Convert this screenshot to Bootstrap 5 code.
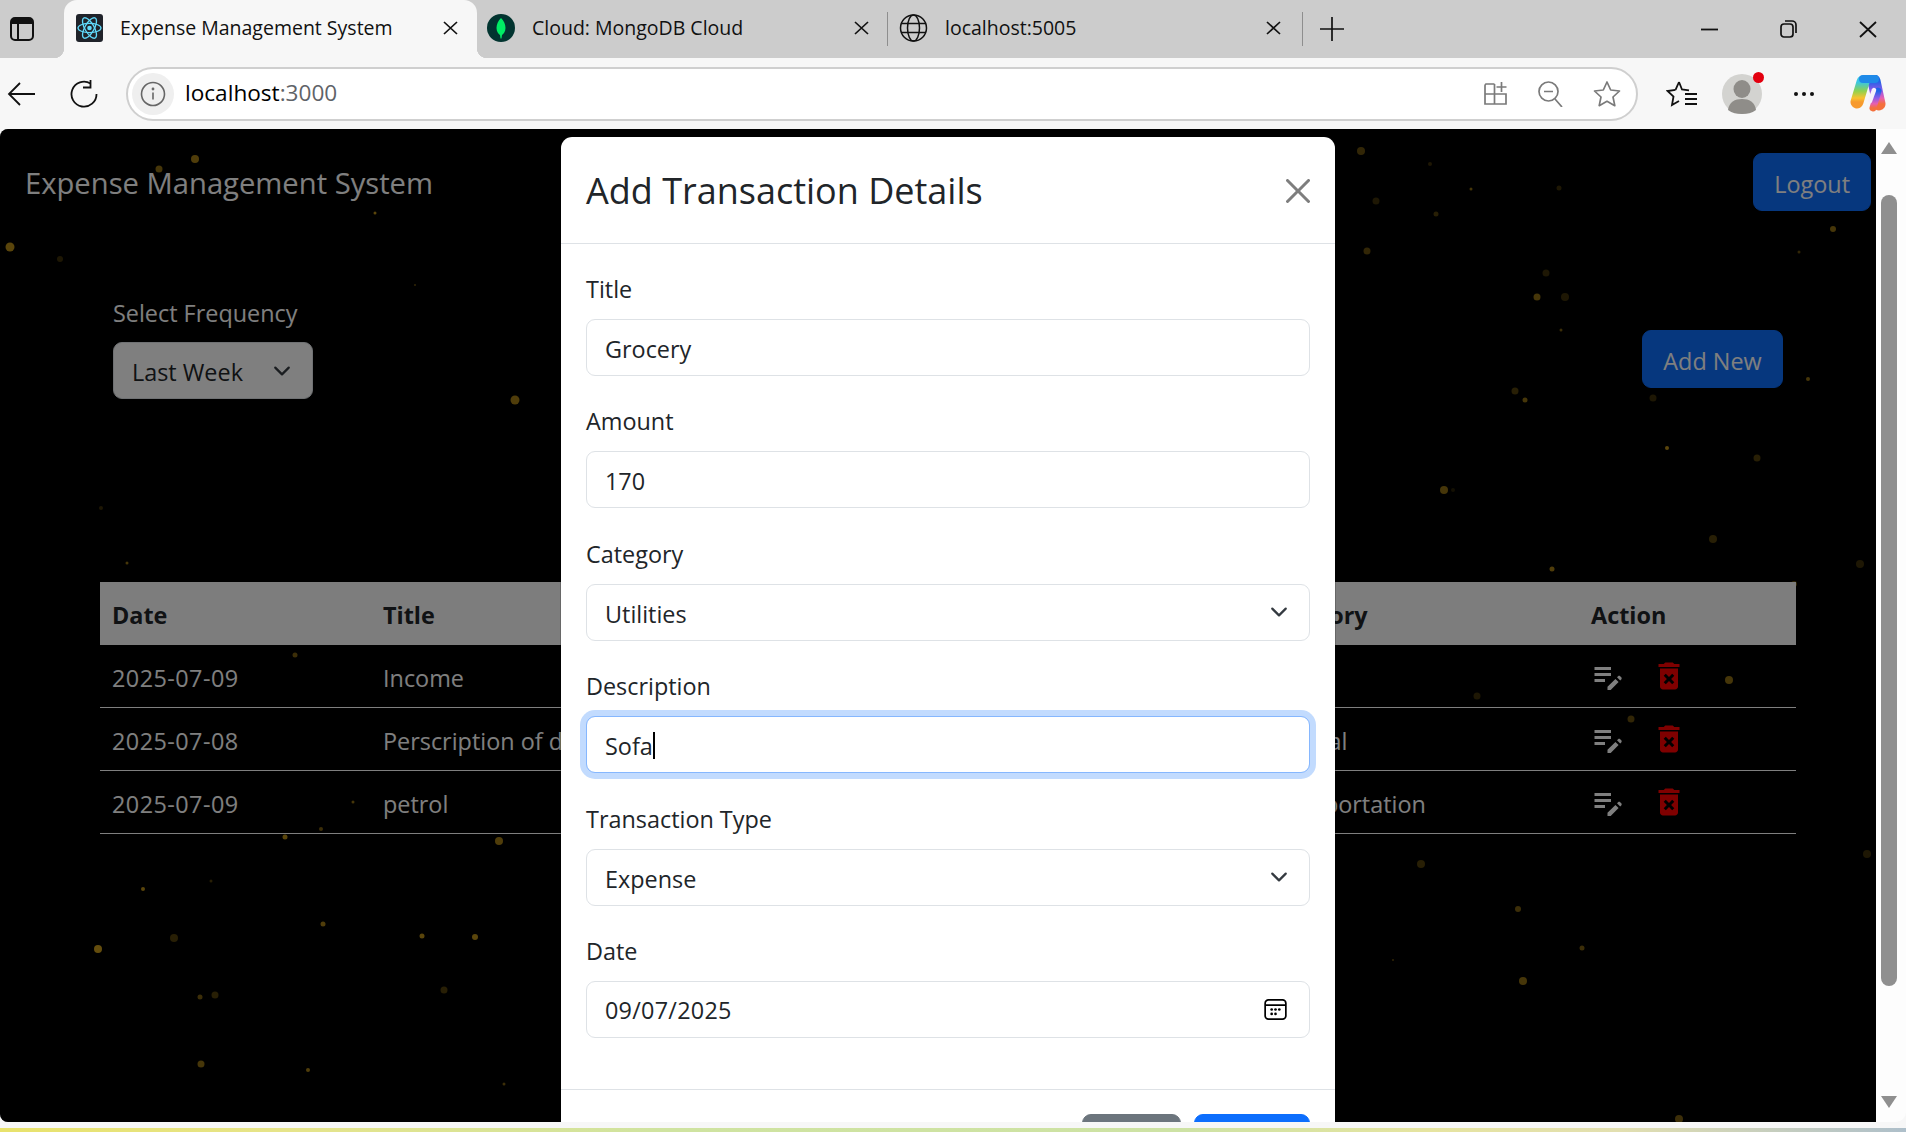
<!DOCTYPE html>
<html lang="en">
  <head>
    <meta charset="UTF-8" />
    <meta name="viewport" content="width=device-width, initial-scale=1.0" />
    <title>Expense Management System</title>
    <link href="https://cdn.jsdelivr.net/npm/bootstrap@5.3.0/dist/css/bootstrap.min.css" rel="stylesheet" />
    <style>
      /* the captured page runs at 150% zoom, so rem is 24px */
      html { font-size: 24px; }
      :root {
        --bs-body-font-family: "Open Sans", "Noto Sans", sans-serif;
        --bs-body-font-size: 23.4px;
        --bs-body-line-height: 1.54;
      }
      body { overflow: hidden; background: #f7f7f7; }

      .window-shell { width: 1906px; height: 1132px; }
      .tab-strip { height: 58px; background: #ccc; color: #111; font-size: 19.5px; line-height: 26px; }
      .win-toggle { width: 64px; padding-left: 10px; }
      .browser-tab { height: 58px; padding: 0 19px 2px 12px; }
      .tab-active { width: 413px; background: #f7f7f7; border-radius: 13px 13px 0 0; position: relative; }
      .tab-active::before, .tab-active::after { content: ""; position: absolute; bottom: 0; width: 10px; height: 10px; }
      .tab-active::before { left: -10px; background: radial-gradient(circle at 0 0, #ccc 10px, #f7f7f7 10.5px); }
      .tab-active::after { right: -10px; background: radial-gradient(circle at 100% 0, #ccc 10px, #f7f7f7 10.5px); }
      .tab-idle { width: 410px; padding: 0 18px 2px 10px; }
      .tab-last { width: 414px; padding: 0 21px 2px 11px; }
      .tab-label { margin-left: 17px; }
      .tab-divider { width: 1px; height: 34px; background: #8e8e8e; }
      .new-tab { margin-left: 17px; }
      .win-controls { margin-left: auto; gap: 62px; padding-right: 29px; }

      .tool-row { height: 71px; background: #f7f7f7; padding-left: 7px; }
      .reload-btn { margin-left: 35px; margin-right: 28px; }
      .address-pill { width: 1512px; height: 54px; background: #fff; border: 2px solid #cfcfcf; border-radius: 27px; padding: 0 15px 0 4px; font-size: 22.6px; color: #000; }
      .info-chip { width: 42px; height: 42px; border-radius: 50%; background: #efefef; margin-right: 11px; }
      .url-port { color: #5f6368; }
      .pill-icons { margin-left: auto; gap: 30px; }
      .tool-right { margin-left: 28px; }
      .avatar-chip { width: 40px; height: 40px; margin-left: 25px; margin-right: 31px; border-radius: 50%; background: #d3d3d0; position: relative; overflow: visible; }
      .avatar-dot { position: absolute; top: -2px; right: -2px; width: 11px; height: 11px; border-radius: 50%; background: #e3000f; }
      .copilot-mark { margin-left: 34px; }

      .view-row { height: 993px; }
      .page-area { width: 1876px; position: relative; overflow: hidden; background: #000; color: #fff; border-radius: 8px 0 0 8px; }
      .star-field { position: absolute; inset: 0; width: 1876px; height: 993px; }
      .page-content { position: relative; }
      .top-bar { padding: 24px 5px 0 25px; }
      .top-brand { font-size: 29.2px; line-height: 56px; padding-top: 2px; }
      .btn-page { --bs-btn-padding-y: 0; --bs-btn-padding-x: 20px; --bs-btn-font-size: 23.4px; --bs-btn-line-height: 36px; --bs-btn-border-radius: 9px; height: 58px; padding-top: 3px; }
      .main-wrap { margin: 0 80px 0 100px; }
      .filter-bar { padding: 84px 13px 0; margin-bottom: 183px; }
      .filter-label { line-height: 36px; margin-bottom: 11px; }
      .filter-select { width: 200px; }
      .add-slot { margin-top: 35px; }
      .add-slot .btn-page { width: 141px; padding-left: 0; padding-right: 0; }
      .form-select, .form-control { font-size: 23.4px; line-height: 36px; height: 57px; padding: 11px 18px 9px; }
      .form-select { background-size: 24px 18px; background-position: right 18px center; padding-right: 54px; }

      .spend-table { table-layout: fixed; width: 1696px; margin: 0; --bs-table-bg: transparent; --bs-table-color: #fff; border-color: #fff; }
      .spend-table > :not(caption) > * > * { padding: 15px 12px 11px; line-height: 36px; color: #fff; background: transparent; white-space: nowrap; }
      .spend-table > thead > tr > th { background: #fbfbfb; color: #212529; font-weight: 700; border-bottom-color: #fbfbfb; }
      .date-cell { letter-spacing: .45px; }
      .col-a { width: 271px; }
      .col-b { width: 271px; }
      .col-c { width: 303px; }
      .col-d { width: 306px; }
      .col-e { width: 328px; }
      .col-f { width: 217px; }
      .spend-table > tbody > tr > .action-cell { padding-top: 8px; padding-bottom: 8px; }
      .action-cell svg { display: block; }
      .act-gap { gap: 25px; margin-left: -1px; height: 46px; }

      .page-area .modal-backdrop { position: absolute; width: 100%; height: 100%; --bs-backdrop-opacity: .5; }
      .page-area .modal { position: absolute; width: 1896px; height: 993px; overflow: hidden; --bs-modal-width: 776px; --bs-modal-margin: 7px; --bs-modal-color: #212529; color: #212529; }
      .modal-top { height: 107px; padding: 26px 25px 24px; }
      .modal-title { font-size: 36px; font-weight: 500; line-height: 54px; }
      .modal-top .btn-close { font-size: 24px; }
      .modal-form { padding: 27px 25px 24px; }
      .field-row { margin-bottom: 27.4px; }
      .field-row .form-label { display: block; line-height: 36px; margin-bottom: 12px; }
      .is-focus { border-color: #86b7fe; box-shadow: 0 0 0 6px rgba(13, 110, 253, .25); }
      .caret-wrap { position: relative; }
      .text-caret { position: absolute; left: 67px; top: 16px; width: 1.5px; height: 27px; background: #000; }
      .date-field { letter-spacing: .25px; background: #fff url("data:image/svg+xml,%3Csvg xmlns='http://www.w3.org/2000/svg' viewBox='0 0 24 24'%3E%3Crect x='1.2' y='2' width='21.6' height='20' rx='3.5' fill='none' stroke='%23000' stroke-width='1.8'/%3E%3Cpath d='M1.5 7.5h21' stroke='%23000' stroke-width='1.8'/%3E%3Cg fill='%23000'%3E%3Ccircle cx='8' cy='12' r='1.4'/%3E%3Ccircle cx='12' cy='12' r='1.4'/%3E%3Ccircle cx='16' cy='12' r='1.4'/%3E%3Ccircle cx='8' cy='16.6' r='1.4'/%3E%3Ccircle cx='12' cy='16.6' r='1.4'/%3E%3C/g%3E%3C/svg%3E") no-repeat right 22px center / 23px 23px; }
      .modal-end { padding: 18px 19px; }
      .modal-end .btn { --bs-btn-border-radius: 9px; width: 99px; height: 58px; margin: 6px; }
      .modal-end .btn-primary { width: 116px; }
      .modal-end .btn-secondary { margin-right: 7px; }

      .fake-scroll { width: 30px; background: #fdfdfd; position: relative; border-radius: 0 0 10px 0; }
      .scroll-thumb { position: absolute; left: 5px; top: 66px; width: 16px; height: 791px; border-radius: 8px; background: #8f8f8f; }
      .scroll-up, .scroll-down { position: absolute; left: 5px; width: 0; height: 0; border-left: 8px solid transparent; border-right: 8px solid transparent; }
      .scroll-up { top: 13px; border-bottom: 12px solid #8f8f8f; }
      .scroll-down { top: 967px; border-top: 12px solid #8f8f8f; }

      .desk-strip { height: 10px; background: #f7f7f7; position: relative; }
      .desk-strip::after { content: ""; position: absolute; left: 0; right: 0; bottom: 0; height: 4px; background: linear-gradient(90deg, #e8e26c 0, #e6e48a 15%, #cfe3a0 35%, #cde2a4 62%, #e6e4a0 75%, #e2dfb0 85%, #aebfca 100%); }
    </style>
  </head>
  <body>
    <div class="window-shell d-flex flex-column">
      <div class="tab-strip d-flex align-items-center">
        <div class="win-toggle">
          <svg width="24" height="24" viewBox="0 0 24 24" class="d-block"><rect x="1" y="1" width="22" height="22" rx="4" fill="none" stroke="#111" stroke-width="2"/><path d="M2 2h20v5H2z" fill="#111"/><path d="M8 7v15" stroke="#111" stroke-width="2"/></svg>
        </div>
        <div class="browser-tab tab-active d-flex align-items-center">
          <svg width="27" height="28" viewBox="0 0 27 28"><rect width="27" height="28" rx="3" fill="#20232a"/><g fill="none" stroke="#61dafb" stroke-width="1.3"><ellipse cx="13.5" cy="14" rx="11.5" ry="4.6"/><ellipse cx="13.5" cy="14" rx="11.5" ry="4.6" transform="rotate(60 13.5 14)"/><ellipse cx="13.5" cy="14" rx="11.5" ry="4.6" transform="rotate(120 13.5 14)"/></g><circle cx="13.5" cy="14" r="2.3" fill="#61dafb"/></svg>
          <span class="tab-label">Expense Management System</span>
          <svg class="ms-auto" width="15" height="14" viewBox="0 0 15 14"><path d="M1 1l13 12M14 1 1 13" stroke="#111" stroke-width="1.7" fill="none"/></svg>
        </div>
        <div class="browser-tab tab-idle d-flex align-items-center">
          <svg width="28" height="28" viewBox="0 0 28 28"><circle cx="14" cy="14" r="14" fill="#023430"/><path d="M14 4c3 3 4.500 6.500 4.500 10 0 3.500-2 6-3.500 7l-.5 3.500h-1L13 21c-1.500-1-3.500-3.500-3.500-7 0-3.500 1.500-7 4.500-10z" fill="#00ed64"/></svg>
          <span class="tab-label">Cloud: MongoDB Cloud</span>
          <svg class="ms-auto" width="15" height="14" viewBox="0 0 15 14"><path d="M1 1l13 12M14 1 1 13" stroke="#111" stroke-width="1.7" fill="none"/></svg>
        </div>
        <div class="tab-divider"></div>
        <div class="browser-tab tab-last d-flex align-items-center">
          <svg width="29" height="28" viewBox="0 0 29 28" fill="none" stroke="#111" stroke-width="1.5"><circle cx="14.5" cy="14" r="13"/><ellipse cx="14.5" cy="14" rx="6" ry="13"/><path d="M2 9.500h25M2 18.500h25"/></svg>
          <span class="tab-label">localhost:5005</span>
          <svg class="ms-auto" width="15" height="14" viewBox="0 0 15 14"><path d="M1 1l13 12M14 1 1 13" stroke="#111" stroke-width="1.7" fill="none"/></svg>
        </div>
        <div class="tab-divider"></div>
        <svg class="new-tab" width="24" height="24" viewBox="0 0 24 24"><path d="M12 0v24M0 12h24" stroke="#111" stroke-width="1.7"/></svg>
        <div class="win-controls d-flex align-items-center">
          <svg width="17" height="17" viewBox="0 0 17 17"><path d="M0 8.500h17" stroke="#111" stroke-width="1.8"/></svg>
          <svg width="17" height="18" viewBox="0 0 17 18" fill="none" stroke="#111" stroke-width="1.7"><rect x="1" y="4" width="12" height="13" rx="3"/><path d="M5 1h7a4 4 0 0 1 4 4v8"/></svg>
          <svg width="18" height="17" viewBox="0 0 18 17"><path d="M1 1l16 15M17 1 1 16" stroke="#111" stroke-width="1.8"/></svg>
        </div>
      </div>

      <div class="tool-row d-flex align-items-center">
        <svg width="28" height="24" viewBox="0 0 28 24" fill="none" stroke="#111" stroke-width="1.8"><path d="M28 12H2M13 1 2 12l11 11"/></svg>
        <svg class="reload-btn" width="28" height="28" viewBox="0 0 28 28" fill="none" stroke="#111" stroke-width="1.8"><path d="M20.500 3.500A12.500 12.500 0 1 0 26.500 14"/><path d="M20.500 0v7.500H13"/></svg>
        <div class="address-pill d-flex align-items-center">
          <span class="info-chip d-flex align-items-center justify-content-center">
            <svg width="26" height="26" viewBox="0 0 26 26" fill="none" stroke="#666" stroke-width="1.6"><circle cx="13" cy="13" r="11.500"/><path d="M13 11.500v7"/><circle cx="13" cy="8" r=".6"/></svg>
          </span>
          <span>localhost<span class="url-port">:3000</span></span>
          <div class="pill-icons d-flex align-items-center">
            <svg width="25" height="25" viewBox="0 0 25 25" fill="none" stroke="#7a7a7a" stroke-width="1.7"><path d="M11.500 3H3a2 2 0 0 0-1 1.500V23h21V13H2M11.500 3v20"/><path d="M18.500 1v10M13.500 6h10"/></svg>
            <svg width="25" height="26" viewBox="0 0 25 26" fill="none" stroke="#7a7a7a" stroke-width="1.7"><circle cx="10.500" cy="10.500" r="9.500"/><path d="M6 10.500h9M17 18l7 8"/></svg>
            <svg width="28" height="27" viewBox="0 0 28 27" fill="none" stroke="#7a7a7a" stroke-width="1.7"><path d="M14 2l3.700 8 8.800 1-6.500 6 1.800 8.700L14 21.300 6.200 25.700 8 17l-6.500-6 8.800-1z" stroke-linejoin="round"/></svg>
          </div>
        </div>
        <svg class="tool-right" width="31" height="27" viewBox="0 0 31 27" fill="none" stroke="#111" stroke-width="1.8"><path d="M13 2l3 7.500 7 .8M9.500 9.800 1.500 11l6 5.500L6 25l7-4"/><path d="M9.500 9.800 13 2"/><path d="M19 14h12M19 19h12M19 24h12"/></svg>
        <div class="avatar-chip">
          <svg width="40" height="40" viewBox="0 0 40 40" class="d-block"><ellipse cx="20" cy="15" rx="8.500" ry="9" fill="#8f8d89"/><path d="M6 36c1-8 7-11 14-11s13 3 14 11c-4 3-9 4-14 4S10 39 6 36z" fill="#8f8d89"/></svg>
          <span class="avatar-dot"></span>
        </div>
        <svg width="22" height="6" viewBox="0 0 22 6" fill="#111"><circle cx="3" cy="3" r="2"/><circle cx="11" cy="3" r="2"/><circle cx="19" cy="3" r="2"/></svg>
        <svg class="copilot-mark" width="40" height="37" viewBox="0 0 40 37" fill="none" stroke-linecap="round">
          <defs>
            <linearGradient id="cpA" x1="0" y1="0" x2="0" y2="1"><stop offset="0" stop-color="#38c6e6"/><stop offset=".45" stop-color="#8fd24e"/><stop offset=".8" stop-color="#f8c22f"/><stop offset="1" stop-color="#f79a2e"/></linearGradient>
            <linearGradient id="cpB" x1="0" y1="0" x2="0" y2="1"><stop offset="0" stop-color="#1c62e8"/><stop offset=".4" stop-color="#8a5ae8"/><stop offset=".75" stop-color="#e85fb0"/><stop offset="1" stop-color="#f4703c"/></linearGradient>
          </defs>
          <path d="M30 29 25 6" stroke="url(#cpB)" stroke-width="13"/>
          <path d="M14 7 8 27" stroke="url(#cpA)" stroke-width="13"/>
          <path d="M14 4h12" stroke="#1f8ae8" stroke-width="8"/>
          <path d="M24 33 29 16" stroke="url(#cpB)" stroke-width="7"/>
          <path d="M25 15 21 26" stroke="#f6f0fb" stroke-width="4.500"/>
        </svg>
      </div>

      <div class="view-row d-flex">
        <div class="page-area">
          <svg class="star-field" id="stars" viewBox="0 129 1876 993"></svg>

          <div class="page-content">
            <nav class="top-bar d-flex justify-content-between align-items-center">
              <span class="top-brand">Expense Management System</span>
              <button type="button" class="btn btn-primary btn-page">Logout</button>
            </nav>

            <div class="main-wrap">
              <div class="filter-bar d-flex justify-content-between align-items-start">
                <div>
                  <div class="filter-label">Select Frequency</div>
                  <select class="form-select filter-select">
                    <option>Last Week</option>
                  </select>
                </div>
                <div class="add-slot">
                  <button type="button" class="btn btn-primary btn-page">Add New</button>
                </div>
              </div>

              <table class="table spend-table">
                <thead>
                  <tr>
                    <th class="col-a">Date</th>
                    <th class="col-b">Title</th>
                    <th class="col-c"></th>
                    <th class="col-d"></th>
                    <th class="col-e">Category</th>
                    <th class="col-f">Action</th>
                  </tr>
                </thead>
                <tbody id="rows"></tbody>
              </table>
            </div>
          </div>

          <div class="modal-backdrop show"></div>

          <div class="modal show d-block" tabindex="-1">
            <div class="modal-dialog">
              <div class="modal-content">
                <div class="modal-header modal-top">
                  <h5 class="modal-title">Add Transaction Details</h5>
                  <button type="button" class="btn-close" aria-label="Close"></button>
                </div>
                <div class="modal-body modal-form">
                  <div class="field-row">
                    <label class="form-label">Title</label>
                    <input type="text" class="form-control" value="Grocery" />
                  </div>
                  <div class="field-row">
                    <label class="form-label">Amount</label>
                    <input type="text" class="form-control" value="170" />
                  </div>
                  <div class="field-row">
                    <label class="form-label">Category</label>
                    <select class="form-select"><option>Utilities</option></select>
                  </div>
                  <div class="field-row">
                    <label class="form-label">Description</label>
                    <div class="caret-wrap">
                      <input type="text" class="form-control is-focus" value="Sofa" />
                      <span class="text-caret"></span>
                    </div>
                  </div>
                  <div class="field-row">
                    <label class="form-label">Transaction Type</label>
                    <select class="form-select"><option>Expense</option></select>
                  </div>
                  <div class="field-row">
                    <label class="form-label">Date</label>
                    <input type="text" class="form-control date-field" value="09/07/2025" />
                  </div>
                </div>
                <div class="modal-footer modal-end">
                  <button type="button" class="btn btn-secondary" aria-label="Close"></button>
                  <button type="button" class="btn btn-primary" aria-label="Save"></button>
                </div>
              </div>
            </div>
          </div>
        </div>

        <div class="fake-scroll">
          <span class="scroll-up"></span>
          <span class="scroll-thumb"></span>
          <span class="scroll-down"></span>
        </div>
      </div>

      <div class="desk-strip"></div>
    </div>

    <script src="https://cdn.jsdelivr.net/npm/bootstrap@5.3.0/dist/js/bootstrap.bundle.min.js"></script>
    <script>
      // table rows
      const transacoes = [
        ['2025-07-09', 'Income', ''],
        ['2025-07-08', 'Perscription of doctor', 'Medical'],
        ['2025-07-09', 'petrol', 'Transportation'],
      ];
      const editIcon = '<svg width="36" height="36" viewBox="0 0 24 24" fill="#fff"><path d="M3 10h11v2H3zm0-4h11v2H3zm0 8h7v2H3zm15.010-1.130.710-.710c.390-.390 1.020-.390 1.410 0l.710.710c.390.390.390 1.020 0 1.410l-.710.710zm-1.060 1.060 2.120 2.120-5.290 5.290h-2.120v-2.120z"/></svg>';
      const trashIcon = '<svg width="36" height="36" viewBox="0 0 24 24" fill="#f00"><path d="M6 19c0 1.100.9 2 2 2h8c1.100 0 2-.9 2-2V7H6v12zm2.460-7.120 1.410-1.410L12 12.590l2.120-2.120 1.410 1.410L13.410 14l2.120 2.120-1.410 1.410L12 15.410l-2.120 2.120-1.410-1.410L10.590 14l-2.130-2.120zM15.500 4l-1-1h-5l-1 1H5v2h14V4z"/></svg>';
      document.getElementById('rows').innerHTML = transacoes.map((t) => `
        <tr>
          <td class="date-cell">${t[0]}</td>
          <td>${t[1]}</td>
          <td></td>
          <td></td>
          <td>${t[2]}</td>
          <td class="action-cell"><div class="act-gap d-flex align-items-center">${editIcon}${trashIcon}</div></td>
        </tr>`).join('');

      // background particles: x, y, radius, opacity
      const pontos = [
        [285,837,2.5,.9],[499,841,4,.8],[211,881,1.5,.4],[143,889,2,.9],[323,924,2.5,.8],[422,936,2.5,.9],[475,937,3,.9],
        [174,938,4,.4],[98,949,4,1],[200,997,2.5,.6],[215,995,3.5,.4],[444,990,3.5,.4],[201,1064,3.5,.7],[308,1070,2,.8],
        [504,1084,1.5,.6],[515,400,4.5,.8],[101,508,2,.3],[127,563,1.5,.7],[195,159,4,.8],[159,169,3.5,.7],[10,247,4.5,.9],
        [60,259,3,.3],[375,213,1.5,.9],[415,285,1,.5],[295,655,2.5,.6],[353,802,1.5,.7],[321,829,2,.6],
        [1552,569,2.5,.8],[1860,564,4,.3],[1794,584,3,.5],[1477,696,3.5,.3],[1729,680,4,.7],[1631,719,3.5,.5],
        [1361,151,4,.5],[1430,164,2,.3],[1471,189,1.5,.7],[1559,188,2.5,.3],[1376,201,3.5,.3],[1436,214,2.5,.4],[1367,251,3.5,.5],
        [1546,273,3.5,.3],[1537,297,3.5,.7],[1565,297,4,.3],[1561,330,1.5,.6],[1833,229,3,.7],[1799,252,1.5,.5],
        [1515,391,3.5,.4],[1525,400,2.5,.7],[1653,398,3.5,.3],[1808,379,2,.7],[1667,448,2,.9],[1757,458,3.5,.4],
        [1444,490,4,.7],[1453,490,2,.2],[1713,539,4,.4],[1421,864,4,.4],[1518,909,3,.6],[1867,854,4,.3],
        [1582,948,2.5,.6],[1393,960,1,.5],[1523,981,4,.7],[1679,1119,4,.6],
      ];
      document.getElementById('stars').innerHTML = pontos
        .map((p) => `<circle cx="${p[0]}" cy="${p[1]}" r="${p[2]}" fill="#c89a1a" opacity="${p[3]}"/>`)
        .join('');
    </script>
  </body>
</html>
